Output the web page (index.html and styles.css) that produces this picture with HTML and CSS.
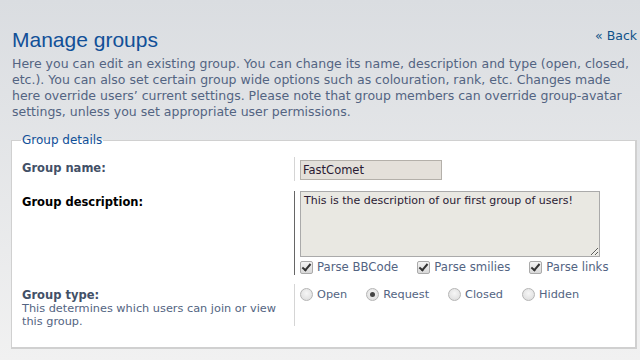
FILE: index.html
```html
<!DOCTYPE html>
<html lang="en">
<head>
  <meta charset="UTF-8" />
  <title>Manage groups</title>
  <link rel="stylesheet" href="styles.css">
</head>
<body>
  <div class="page">
    <a class="back" href="#">&laquo; Back</a>
    <h1>Manage groups</h1>
    <p class="intro">Here you can edit an existing group. You can change its name, description and type (open, closed, etc.). You can also set certain group wide options such as colouration, rank, etc. Changes made here override users’ current settings. Please note that group members can override group-avatar settings, unless you set appropriate user permissions.</p>

    <fieldset class="details">
      <legend>Group details</legend>

      <dl class="row">
        <dt><label>Group name:</label></dt>
        <dd><input class="text" type="text" value="FastComet"></dd>
      </dl>

      <dl class="row hover">
        <dt><label>Group description:</label></dt>
        <dd>
          <textarea class="desc">This is the description of our first group of users!</textarea>
          <div class="checks">
            <label><input type="checkbox" checked> Parse BBCode</label>
            <label><input type="checkbox" checked> Parse smilies</label>
            <label><input type="checkbox" checked> Parse links</label>
          </div>
        </dd>
      </dl>

      <dl class="row">
        <dt><label>Group type:</label><span>This determines which users can join or view this group.</span></dt>
        <dd class="radios">
          <label><input type="radio" name="type"> Open</label>
          <label><input type="radio" name="type" checked> Request</label>
          <label><input type="radio" name="type"> Closed</label>
          <label><input type="radio" name="type"> Hidden</label>
        </dd>
      </dl>
    </fieldset>
  </div>
</body>
</html>
```

FILE: styles.css
```css
body {
  margin: 0;
  height: 360px;
  overflow: hidden;
  font-family: "DejaVu Sans", Verdana, sans-serif;
  font-size: 12px;
  color: #536482;
  background: linear-gradient(to bottom, #dadde1, #f1f1f1);
}

.page {
  padding: 27px 3px 0 11px;
}

.back {
  float: right;
  margin-top: 1px;
  font-size: 12.5px;
  color: #105289;
  text-decoration: none;
}

h1 {
  margin: 0 0 3px 1px;
  font-family: "Liberation Sans", Arial, sans-serif;
  font-weight: normal;
  font-size: 21px;
  line-height: 26px;
  color: #115098;
}

.intro {
  margin: 0 4px 0 1px;
  font-size: 12.5px;
  line-height: 16px;
}

.details {
  margin: 13px 0 0;
  padding: 10px 0 9px 10px;
  border: 1px solid #d0d0d0;
  border-right-width: 2px;
  border-bottom-width: 2px;
  background: #fff;
}

.details legend {
  padding: 0 1px;
  margin-left: -1px;
  font-size: 12px;
  color: #115098;
}

.row {
  display: flex;
  margin: 0 0 10px;
}

.row.hover {
  margin-bottom: 9px;
}

.row dt {
  width: 272px;
  margin: 0;
  padding-top: 4px;
  font-size: 11.5px;
  line-height: 14px;
}

.row dt label {
  display: block;
  font-weight: bold;
  color: #425067;
}

.row dt span {
  display: block;
  font-size: 11.3px;
  line-height: 13px;
}

.row dd {
  margin: 0;
  padding-left: 5px;
  border-left: 1px solid #d5d5d5;
}

.row.hover dt label {
  color: #000;
}

.row.hover dd {
  border-left-color: #666;
}

.text {
  box-sizing: border-box;
  width: 142px;
  height: 20px;
  margin: 3px 0 1px;
  padding: 0 2px;
  border: 1px solid #b4b0aa;
  background: #e4e0da;
  font: 11.5px "DejaVu Sans", Verdana, sans-serif;
  color: #2a1a33;
}

.desc {
  box-sizing: border-box;
  display: block;
  width: 300px;
  height: 66px;
  margin: 0;
  padding: 2px 3px;
  border: 1px solid #aaa;
  background: #e9e8e2;
  font: 11px/14px "DejaVu Sans", Verdana, sans-serif;
  color: #2a1a33;
  resize: both;
}

.checks {
  display: flex;
  gap: 19px;
  margin-top: 2px;
  font-size: 11.7px;
  line-height: 16px;
}

.checks label,
.radios label {
  display: flex;
  align-items: center;
  gap: 4px;
}

.checks input {
  appearance: none;
  position: relative;
  width: 13px;
  height: 13px;
  margin: 0;
  border: 1px solid #aaa;
  border-radius: 2px;
  background: linear-gradient(#f4f4f4, #d8d8d8);
}

.checks input:checked::after {
  content: "";
  position: absolute;
  left: 3px;
  top: 0;
  width: 3px;
  height: 7px;
  border: solid #333;
  border-width: 0 2px 2px 0;
  transform: rotate(40deg);
}

.radios {
  display: flex;
  align-items: flex-start;
  gap: 19px;
  height: 42px;
  padding-top: 3px;
  box-sizing: border-box;
  font-size: 11.3px;
  line-height: 16px;
}

.radios input {
  appearance: none;
  position: relative;
  width: 13px;
  height: 13px;
  margin: -2px 0 0;
  border: 1px solid #b5b5b5;
  border-radius: 50%;
  background: radial-gradient(circle at 50% 40%, #f6f6f6, #d9d9d9);
}

.radios input:checked::after {
  content: "";
  position: absolute;
  left: 3px;
  top: 3px;
  width: 5px;
  height: 5px;
  border-radius: 50%;
  background: #444;
}
```
